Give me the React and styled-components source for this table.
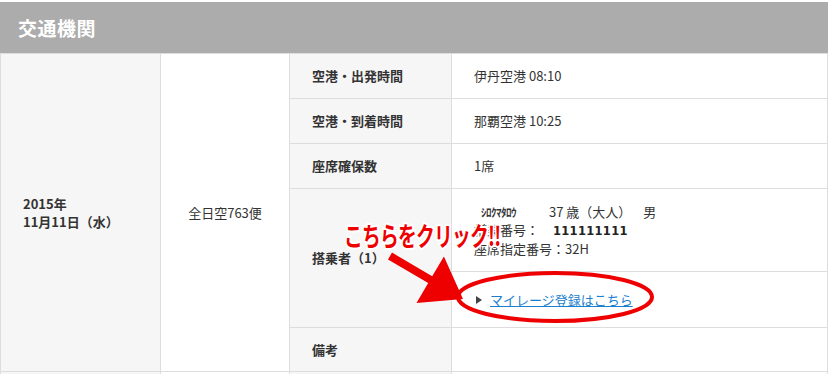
import React from 'react'
import styled, { createGlobalStyle } from 'styled-components'

const GlobalStyle = createGlobalStyle`
    body {
        margin: 0;
        background: #fff;
        font-family: 'Noto Sans CJK JP', 'Noto Sans', sans-serif;
    }
`

const Page = styled.div`
    position: relative;
    width: 828px;
    padding-top: 2px;
`

const Header = styled.h2`
    margin: 0;
    height: 51px;
    display: flex;
    align-items: center;
    padding-left: 18px;
    background: #acacac;
    color: #fff;
    font-size: 19px;
    font-weight: bold;
    letter-spacing: 0.5px;
`

const Table = styled.table`
    width: 828px;
    border-collapse: collapse;
    table-layout: fixed;
    font-size: 13px;
    color: #333;
`

const Cell = styled.td`
    border: 1px solid #dddddd;
    background: ${p => (p.$shade ? '#f6f6f6' : '#fff')};
    padding: 0 ${p => p.$pad || 22}px;
    text-align: ${p => p.$center ? 'center' : 'left'};
    vertical-align: middle;
    font-weight: ${p => (p.$bold ? 'bold' : 'normal')};
    line-height: 18px;
`

const Row = styled.tr`
    height: ${p => p.$h}px;
`

const Line = styled.div`
    display: flex;
    align-items: baseline;
`

const Kana = styled.span`
    font-size: 11px;
    font-weight: bold;
    margin-left: 7px;
    width: 68px;
    letter-spacing: -0.5px;
`

const Gap = styled.span`
    display: inline-block;
    width: ${p => p.$w}px;
`

const Digits = styled.span`
    font-family: 'DejaVu Sans', sans-serif;
    font-size: 11.5px;
    font-weight: bold;
    letter-spacing: 0.3px;
    color: #222;
`

const LinkWrap = styled.div`
    display: flex;
    align-items: center;
    gap: 8px;
`

const Tri = styled.span`
    width: 0;
    height: 0;
    border-top: 4px solid transparent;
    border-bottom: 4px solid transparent;
    border-left: 6px solid #444;
    margin-left: 2px;
`

const Link = styled.a`
    color: #1b7fcf;
    text-decoration: underline;
    font-size: 13px;
`

const Overlay = styled.svg`
    position: absolute;
    left: 0;
    top: 0;
    pointer-events: none;
`

const Callout = styled.div`
    position: absolute;
    left: 344px;
    top: 216px;
    color: #ee0000;
    font-size: 26px;
    font-weight: bold;
    letter-spacing: -1px;
    transform: scaleX(0.72);
    transform-origin: left top;
    -webkit-text-stroke: 4px #fff;
    paint-order: stroke fill;
    white-space: nowrap;
    pointer-events: none;
`

export default function App() {
    return (
        <Page>
            <GlobalStyle />
            <Header>交通機関</Header>
            <Table>
                <colgroup>
                    <col style={{ width: 160 }} />
                    <col style={{ width: 129 }} />
                    <col style={{ width: 162 }} />
                    <col />
                </colgroup>
                <tbody>
                    <Row $h={45}>
                        <Cell $shade $bold rowSpan={6}>2015年<br />11月11日（水）</Cell>
                        <Cell $center $pad={8} rowSpan={6}>全日空763便</Cell>
                        <Cell $shade $bold>空港・出発時間</Cell>
                        <Cell>伊丹空港 08:10</Cell>
                    </Row>
                    <Row $h={45}>
                        <Cell $shade $bold>空港・到着時間</Cell>
                        <Cell>那覇空港 10:25</Cell>
                    </Row>
                    <Row $h={45}>
                        <Cell $shade $bold>座席確保数</Cell>
                        <Cell>1席</Cell>
                    </Row>
                    <Row $h={83}>
                        <Cell $shade $bold rowSpan={2}>搭乗者（1）</Cell>
                        <Cell>
                            <Line>
                                <Kana>ｼﾛｸﾏﾀﾛｳ</Kana>
                                37 歳（大人）<Gap $w={12} />男
                            </Line>
                            <Line>搭乗番号：<Gap $w={14} /><Digits>111111111</Digits></Line>
                            <Line>座席指定番号：32H</Line>
                        </Cell>
                    </Row>
                    <Row $h={56}>
                        <Cell>
                            <LinkWrap>
                                <Tri />
                                <Link href="#">マイレージ登録はこちら</Link>
                            </LinkWrap>
                        </Cell>
                    </Row>
                    <Row $h={44}>
                        <Cell $shade $bold>備考</Cell>
                        <Cell />
                    </Row>
                    <Row $h={20}>
                        <Cell $shade />
                        <Cell />
                        <Cell $shade />
                        <Cell />
                    </Row>
                </tbody>
            </Table>
            <Overlay width="828" height="374" viewBox="0 0 828 374">
                <ellipse cx="555" cy="297" rx="97" ry="24" fill="none" stroke="#ee0000" strokeWidth="4" />
                <polygon
                    points="392,252.6 432.2,276.3 443.9,256.4 463,299 416.5,303 428.2,283.1 388,259.4"
                    fill="#ee0000"
                />
            </Overlay>
            <Callout>こちらをクリック!!</Callout>
        </Page>
    )
}
